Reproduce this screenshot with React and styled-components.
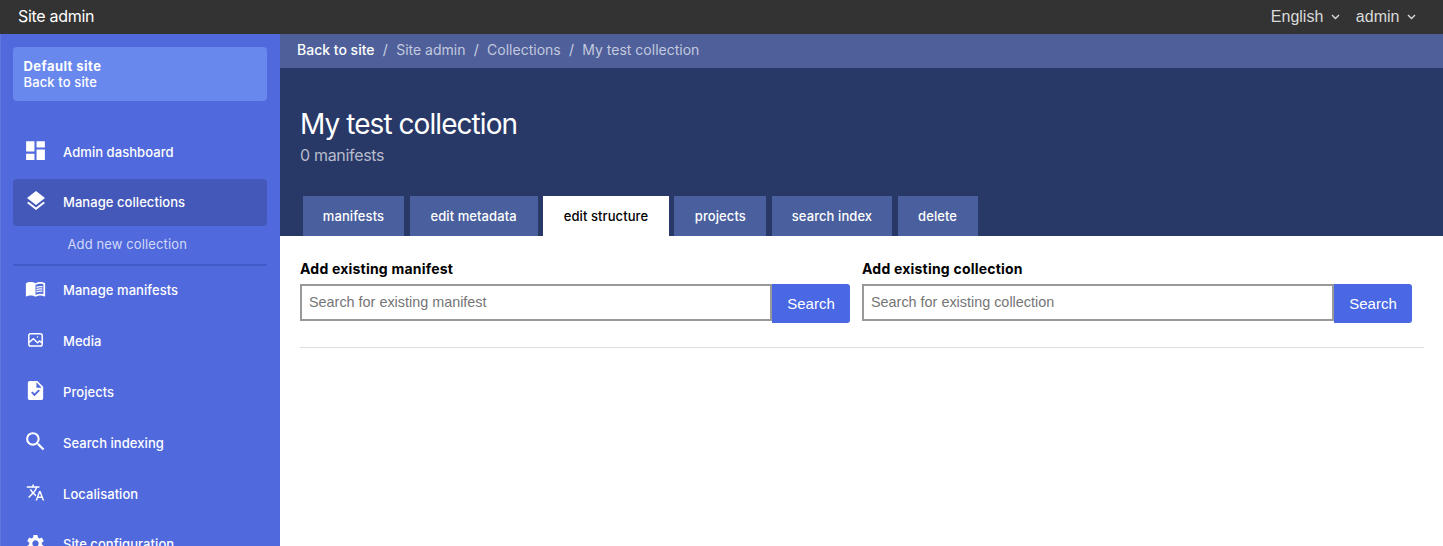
import React from 'react';
import styled, { createGlobalStyle } from 'styled-components';
import { MdDashboard, MdLayers, MdMenuBook, MdTask, MdSearch, MdTranslate, MdSettings } from 'react-icons/md';

const sans = 'Inter, "Liberation Sans", sans-serif';
const arial = '"Liberation Sans", Arial, sans-serif';

const GlobalStyle = createGlobalStyle`
  * { box-sizing: border-box; }
  body { margin: 0; background: #fff; font-family: ${sans}; color: #000; overflow: hidden; }
`;

const Page = styled.div`
  height: 546px;
  display: flex;
  flex-direction: column;
  overflow: hidden;
`;

const TopBar = styled.header`
  flex: none;
  height: 34px;
  display: flex;
  align-items: center;
  justify-content: space-between;
  padding: 0 26.6px 0 18px;
  background: #333;
  color: #fff;
`;

const Brand = styled.div`
  padding-bottom: 2px;
  font-size: 16px;
  line-height: 20px;
  letter-spacing: -0.3px;
`;

const TopMenus = styled.nav`
  display: flex;
  gap: 15.5px;
`;

const TopMenu = styled.button`
  display: flex;
  align-items: center;
  gap: 8px;
  padding: 0;
  border: 0;
  background: none;
  color: #dadada;
  font: 16px/20px ${arial};

  svg { width: 9px; height: 6px; }
`;

const Body = styled.div`
  flex: 1;
  min-height: 0;
  display: flex;
`;

const Sidebar = styled.aside`
  flex: none;
  width: 280px;
  padding: 13px 13px 0 12px;
  border-left: 1px solid #6176de;
  background: #5069dd;
  color: #fff;
  overflow: hidden;
`;

const SiteCard = styled.div`
  height: 54px;
  margin-bottom: 27px;
  padding: 11px 10.5px;
  border-radius: 4px;
  background: #6988ee;
  font-size: 13px;
  font-weight: 500;
  letter-spacing: 0.13px;
  line-height: 16px;
`;

const SiteName = styled.div`
  font-weight: 700;
  letter-spacing: 0.45px;
`;

const NavItem = styled.a`
  display: flex;
  align-items: center;
  height: 47px;
  margin-bottom: 4px;
  border-radius: 4px;
  font-size: 13px;
  font-weight: 500;
  letter-spacing: 0.06px;
  background: ${(p) => (p.$active ? '#4358b9' : 'transparent')};
`;

const NavIcon = styled.span`
  flex: none;
  width: 45px;
  height: 24px;
  margin: -3px 5px 0 0;
  display: flex;
  align-items: center;
  justify-content: center;
`;

const NavText = styled.span`
  line-height: 16px;
  padding-bottom: ${(p) => (p.$raised ? 1 : 0)}px;
`;

const SubNav = styled.div`
  height: 40px;
  margin-top: -4px;
  padding-left: 54.5px;
  border-bottom: 2px solid #3f5cc8;
  color: #d3daf7;
  font-size: 13px;
  letter-spacing: 0.12px;
  line-height: 37px;
`;

const Main = styled.main`
  flex: 1;
  min-width: 0;
`;

const Breadcrumbs = styled.nav`
  display: flex;
  height: 34px;
  padding-left: 17px;
  background: #4e5f9a;
  color: #c3c9de;
  font-size: 14px;
  line-height: 32px;
`;

const Crumb = styled.span`
  color: ${(p) => (p.$home ? '#fff' : 'inherit')};
  font-weight: ${(p) => (p.$home ? 500 : 400)};

  &:not(:first-child)::before {
    content: '/';
    margin: 0 8.3px;
    color: #ccd1e3;
  }
`;

const Hero = styled.section`
  height: 168px;
  padding: 38px 20px 0;
  display: flex;
  flex-direction: column;
  background: #283867;
`;

const Title = styled.h1`
  margin: 0;
  color: #fff;
  font-size: 28px;
  font-weight: 400;
  letter-spacing: -0.94px;
  line-height: 36px;
`;

const Subtitle = styled.div`
  color: #b7bccb;
  font-size: 16px;
  letter-spacing: -0.32px;
  line-height: 26px;
`;

const Tabs = styled.div`
  display: flex;
  gap: 5.6px;
  margin: auto 0 0 3px;
`;

const Tab = styled.button`
  flex: none;
  width: ${(p) => p.$width}px;
  height: 40px;
  padding: 0;
  border: 0;
  background: ${(p) => (p.$active ? '#fff' : '#4a5f9d')};
  color: ${(p) => (p.$active ? '#000' : '#fff')};
  font: 500 13px ${sans};
  letter-spacing: 0.08px;
  white-space: nowrap;
`;

const Content = styled.section`
  margin: 0 19px 0 20px;
  padding: 23px 12px 24px 0;
  display: grid;
  grid-template-columns: 1fr 1fr;
  gap: 12px;
  border-bottom: 1px solid #ddd;
`;

const Label = styled.label`
  display: block;
  height: 25px;
  font-size: 14px;
  font-weight: 700;
  letter-spacing: 0.21px;
  line-height: 20px;
`;

const SearchRow = styled.div`
  display: flex;
  align-items: flex-start;
`;

const SearchInput = styled.input`
  flex: 1;
  min-width: 0;
  height: 37px;
  padding: 0 7px 2px;
  border: 2px solid #999;
  border-radius: 0;
  background: #fff;
  font: 14.4px ${arial};

  &::placeholder { color: #757575; }
`;

const SearchButton = styled.button`
  width: 78px;
  height: 39px;
  padding: 0;
  border: 0;
  border-radius: 0 3px 3px 0;
  background: #4a67e4;
  color: #fff;
  font: 15px ${arial};
`;

const Chevron = () => (
  <svg viewBox="0 0 9 6" fill="none" stroke="currentColor" strokeWidth="1.4">
    <path d="M1 1l3.5 3.5L8 1" />
  </svg>
);

const MediaIcon = () => (
  <svg width="15" height="18" viewBox="0 0 15 18" fill="none" stroke="currentColor" strokeWidth="1.5">
    <rect x="0.8" y="3.7" width="13.4" height="12.4" rx="1.8" />
    <path d="M1.2 12.4L5.4 8.7l4.2 4 2-1.8 2.4 2" />
    <circle cx="9.5" cy="7" r="0.4" strokeWidth="1" />
  </svg>
);

const navItems = [
  { label: 'Admin dashboard', icon: <MdDashboard size={25} /> },
  { label: 'Manage collections', icon: <MdLayers size={24} />, active: true, raised: true, child: 'Add new collection' },
  { label: 'Manage manifests', icon: <MdMenuBook size={21} /> },
  { label: 'Media', icon: <MediaIcon /> },
  { label: 'Projects', icon: <MdTask size={23} /> },
  { label: 'Search indexing', icon: <MdSearch size={25} /> },
  { label: 'Localisation', icon: <MdTranslate size={19} /> },
  { label: 'Site configuration', icon: <MdSettings size={21} />, raised: true },
];

const tabs = [
  ['manifests', 101],
  ['edit metadata', 128],
  ['edit structure', 125.6],
  ['projects', 92],
  ['search index', 120],
  ['delete', 80],
];

function SearchPanel({ label, placeholder }) {
  return (
    <div>
      <Label>{label}</Label>
      <SearchRow>
        <SearchInput placeholder={placeholder} />
        <SearchButton>Search</SearchButton>
      </SearchRow>
    </div>
  );
}

export default function App() {
  return (
    <Page>
      <GlobalStyle />
      <TopBar>
        <Brand>Site admin</Brand>
        <TopMenus>
          <TopMenu>English <Chevron /></TopMenu>
          <TopMenu>admin <Chevron /></TopMenu>
        </TopMenus>
      </TopBar>
      <Body>
        <Sidebar>
          <SiteCard>
            <SiteName>Default site</SiteName>
            <div>Back to site</div>
          </SiteCard>
          {navItems.map((item) => (
            <React.Fragment key={item.label}>
              <NavItem $active={item.active}>
                <NavIcon>{item.icon}</NavIcon>
                <NavText $raised={item.raised}>{item.label}</NavText>
              </NavItem>
              {item.child && <SubNav>{item.child}</SubNav>}
            </React.Fragment>
          ))}
        </Sidebar>
        <Main>
          <Breadcrumbs>
            <Crumb $home>Back to site</Crumb>
            <Crumb>Site admin</Crumb>
            <Crumb>Collections</Crumb>
            <Crumb>My test collection</Crumb>
          </Breadcrumbs>
          <Hero>
            <Title>My test collection</Title>
            <Subtitle>0 manifests</Subtitle>
            <Tabs>
              {tabs.map(([name, width]) => (
                <Tab key={name} $width={width} $active={name === 'edit structure'}>{name}</Tab>
              ))}
            </Tabs>
          </Hero>
          <Content>
            <SearchPanel label="Add existing manifest" placeholder="Search for existing manifest" />
            <SearchPanel label="Add existing collection" placeholder="Search for existing collection" />
          </Content>
        </Main>
      </Body>
    </Page>
  );
}
